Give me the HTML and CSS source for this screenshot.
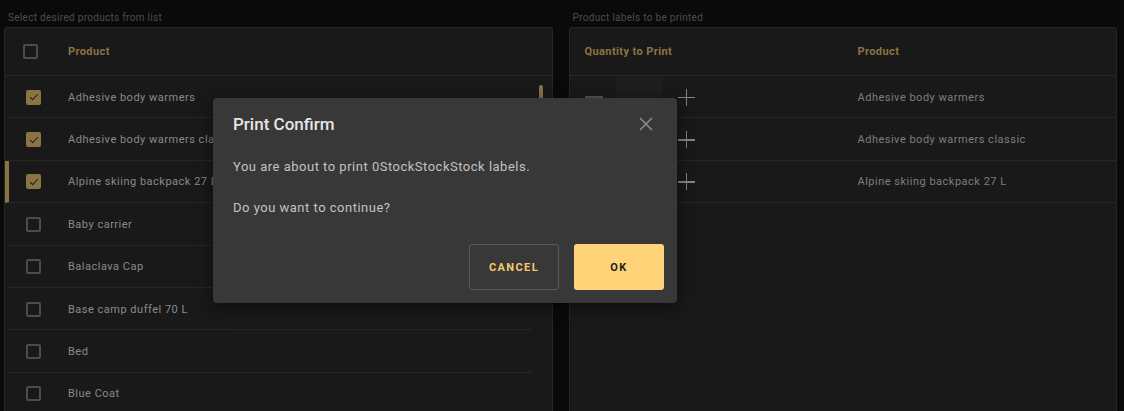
FILE: index.html
```html
<!DOCTYPE html>
<html lang="en">
  <head>
    <meta charset="UTF-8" />
    <meta name="viewport" content="width=device-width, initial-scale=1.0" />
    <title>Print labels</title>
    <link rel="stylesheet" href="styles.css">
  </head>
  <body>
    <div class="page">
      <section class="pane">
        <div class="pane-title">Select desired products from list</div>
        <div class="card">
          <div class="thead">
            <span class="cell-check"><span class="checkbox head-box"></span></span>
            <span class="th">Product</span>
          </div>
          <div class="tbody">
            <div class="rows">
              <div class="row"><span class="cell-check"><span class="checkbox on"></span></span><span class="td">Adhesive body warmers</span></div>
              <div class="row"><span class="cell-check"><span class="checkbox on"></span></span><span class="td">Adhesive body warmers classic</span></div>
              <div class="row active"><span class="cell-check"><span class="checkbox on"></span></span><span class="td">Alpine skiing backpack 27 L</span></div>
              <div class="row"><span class="cell-check"><span class="checkbox"></span></span><span class="td">Baby carrier</span></div>
              <div class="row"><span class="cell-check"><span class="checkbox"></span></span><span class="td">Balaclava Cap</span></div>
              <div class="row"><span class="cell-check"><span class="checkbox"></span></span><span class="td">Base camp duffel 70 L</span></div>
              <div class="row"><span class="cell-check"><span class="checkbox"></span></span><span class="td">Bed</span></div>
              <div class="row"><span class="cell-check"><span class="checkbox"></span></span><span class="td">Blue Coat</span></div>
            </div>
            <div class="scroll"><div class="thumb"></div></div>
          </div>
        </div>
      </section>

      <section class="pane">
        <div class="pane-title">Product labels to be printed</div>
        <div class="card">
          <div class="thead">
            <span class="th qty-col">Quantity to Print</span>
            <span class="th">Product</span>
          </div>
          <div class="row">
            <span class="qty-col stepper"><span class="minus"></span><span class="qty-input"></span><span class="plus"></span></span>
            <span class="td dim">Adhesive body warmers</span>
          </div>
          <div class="row">
            <span class="qty-col stepper"><span class="minus"></span><span class="qty-input"></span><span class="plus"></span></span>
            <span class="td dim">Adhesive body warmers classic</span>
          </div>
          <div class="row">
            <span class="qty-col stepper"><span class="minus"></span><span class="qty-input"></span><span class="plus"></span></span>
            <span class="td dim">Alpine skiing backpack 27 L</span>
          </div>
        </div>
      </section>
    </div>

    <div class="dialog">
      <div class="dialog-head">
        <h2>Print Confirm</h2>
        <svg class="close" width="14" height="14" viewBox="0 0 14 14">
          <path d="M1 1 L13 13 M13 1 L1 13" stroke="#8a8a8a" stroke-width="1.6" fill="none"/>
        </svg>
      </div>
      <p class="msg first">You are about to print 0StockStockStock labels.</p>
      <p class="msg">Do you want to continue?</p>
      <div class="actions">
        <button class="btn btn-cancel">CANCEL</button>
        <button class="btn btn-ok">OK</button>
      </div>
    </div>
  </body>
</html>
```

FILE: styles.css
```css
html, body {
  margin: 0;
  height: 100%;
  overflow: hidden;
}
body {
  background: #0a0a0a;
  font-family: Roboto, "Noto Sans", sans-serif;
  position: relative;
}

.page {
  display: flex;
  gap: 16px;
  padding: 0 7px 0 4px;
}
.pane {
  flex: 1;
  min-width: 0;
}
.pane-title {
  height: 27px;
  line-height: 36px;
  padding-left: 4px;
  font-size: 10px;
  color: #4d4d4d;
  letter-spacing: 0.3px;
}

.card {
  background: #191919;
  border: 1px solid #262626;
  border-radius: 3px;
  height: 400px;
  overflow: hidden;
}

.thead {
  display: flex;
  align-items: center;
  height: 47px;
  border-bottom: 1px solid #272727;
}
.th {
  font-size: 11px;
  font-weight: 700;
  color: #8b7443;
  letter-spacing: 0.4px;
}

.tbody {
  display: flex;
}
.rows {
  flex: 1;
}
.scroll {
  width: 20px;
  padding-top: 9px;
}
.thumb {
  width: 4px;
  height: 60px;
  margin-left: 7px;
  background: #8b7443;
  border-radius: 2px;
}

.row {
  display: flex;
  align-items: center;
  height: 42.4px;
  box-sizing: border-box;
  padding-top: 1px;
  border-bottom: 1px solid #272727;
}
.rows .row {
  border-left: 4px solid transparent;
}
.row.active {
  border-left-color: #8b7443;
}
.td {
  font-size: 11px;
  color: #8a8a8a;
  letter-spacing: 0.5px;
}
.td.dim {
  color: #7e7e7e;
}

.cell-check {
  width: 59px;
  padding-left: 17px;
  box-sizing: border-box;
  display: flex;
}
.thead .cell-check {
  width: 63px;
  padding-left: 18px;
}
.checkbox {
  width: 15px;
  height: 15px;
  box-sizing: border-box;
  border: 2px solid #4c4c4c;
  border-radius: 2px;
  position: relative;
}
.checkbox.on {
  background: #8b7443;
  border-color: #8b7443;
}
.checkbox.on::after {
  content: "";
  position: absolute;
  left: 3.5px;
  top: 0.5px;
  width: 3px;
  height: 7px;
  border: solid #1b1b1b;
  border-width: 0 1.6px 1.6px 0;
  transform: rotate(45deg);
}

/* right table */
.thead .qty-col {
  width: 288px;
  padding-left: 15px;
  box-sizing: border-box;
}
.stepper {
  width: 288px;
  padding-left: 15px;
  box-sizing: border-box;
  display: flex;
  align-items: center;
  height: 100%;
}
.minus {
  width: 18px;
  height: 2px;
  margin-top: -1px;
  background: #555;
}
.qty-input {
  width: 47px;
  height: 41px;
  margin-left: 13px;
  background: #1e1e1e;
}
.plus {
  width: 17px;
  height: 17px;
  margin-left: 15px;
  position: relative;
}
.plus::before,
.plus::after {
  content: "";
  position: absolute;
  background: #858585;
}
.plus::before {
  left: 0;
  right: 0;
  top: 8px;
  height: 1.5px;
}
.plus::after {
  top: 0;
  bottom: 0;
  left: 8px;
  width: 1.5px;
}

/* dialog */
.dialog {
  position: absolute;
  left: 213px;
  top: 98px;
  width: 464px;
  height: 205px;
  box-sizing: border-box;
  padding: 16px 13px 13px 20px;
  background: #383838;
  border-radius: 4px;
  box-shadow: 0 4px 18px rgba(0, 0, 0, 0.5);
}
.dialog-head {
  display: flex;
  justify-content: space-between;
  align-items: center;
  height: 20px;
  padding-right: 11px;
}
.dialog-head h2 {
  margin: 0;
  font-size: 17px;
  font-weight: 500;
  color: #e6e6e6;
}
.msg {
  margin: 23px 0 0;
  line-height: 20px;
  font-size: 13px;
  color: #c2c2c2;
  letter-spacing: 0.5px;
}
.msg + .msg {
  margin-top: 21px;
}
.actions {
  display: flex;
  justify-content: flex-end;
  gap: 15px;
  margin-top: 26px;
}
.btn {
  width: 90px;
  height: 46px;
  border-radius: 3px;
  font-family: Roboto, sans-serif;
  font-size: 11px;
  font-weight: 700;
  letter-spacing: 1.4px;
}
.btn-cancel {
  background: transparent;
  border: 1px solid #5a5a5a;
  color: #f5c96c;
}
.btn-ok {
  background: #ffd479;
  border: 0;
  color: #1e1e1e;
}
```
